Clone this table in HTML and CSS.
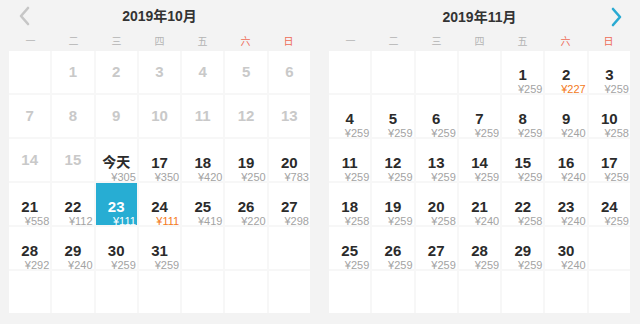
FILE: index.html
```html
<!DOCTYPE html>
<html lang="zh">
<head>
<meta charset="utf-8">
<title>日历</title>
<link rel="stylesheet" href="styles.css">
</head>
<body>
<div class="wrap">
  <section class="cal">
    <header class="cal-head">
      <span class="arrow arrow-prev"><svg width="12" height="20" viewBox="0 0 12 20"><path d="M10 2 L3 10 L10 18" fill="none" stroke="currentColor" stroke-width="2.6" stroke-linecap="round" stroke-linejoin="round"/></svg></span>
      <h2 class="title">2019年10月</h2>
      <span class="arrow-space"></span>
    </header>
    <div class="weekdays"><span>一</span><span>二</span><span>三</span><span>四</span><span>五</span><span class="we">六</span><span class="we">日</span></div>
    <div class="grid">
      <div class="cell"></div>
      <div class="cell off"><b>1</b></div>
      <div class="cell off"><b>2</b></div>
      <div class="cell off"><b>3</b></div>
      <div class="cell off"><b>4</b></div>
      <div class="cell off"><b>5</b></div>
      <div class="cell off"><b>6</b></div>

      <div class="cell off"><b>7</b></div>
      <div class="cell off"><b>8</b></div>
      <div class="cell off"><b>9</b></div>
      <div class="cell off"><b>10</b></div>
      <div class="cell off"><b>11</b></div>
      <div class="cell off"><b>12</b></div>
      <div class="cell off"><b>13</b></div>

      <div class="cell off"><b>14</b></div>
      <div class="cell off"><b>15</b></div>
      <div class="cell today"><b>今天</b><i>¥305</i></div>
      <div class="cell"><b>17</b><i>¥350</i></div>
      <div class="cell"><b>18</b><i>¥420</i></div>
      <div class="cell"><b>19</b><i>¥250</i></div>
      <div class="cell"><b>20</b><i>¥783</i></div>

      <div class="cell"><b>21</b><i>¥558</i></div>
      <div class="cell"><b>22</b><i>¥112</i></div>
      <div class="cell sel"><b>23</b><i>¥111</i></div>
      <div class="cell"><b>24</b><i class="low">¥111</i></div>
      <div class="cell"><b>25</b><i>¥419</i></div>
      <div class="cell"><b>26</b><i>¥220</i></div>
      <div class="cell"><b>27</b><i>¥298</i></div>

      <div class="cell"><b>28</b><i>¥292</i></div>
      <div class="cell"><b>29</b><i>¥240</i></div>
      <div class="cell"><b>30</b><i>¥259</i></div>
      <div class="cell"><b>31</b><i>¥259</i></div>
      <div class="cell"></div>
      <div class="cell"></div>
      <div class="cell"></div>

      <div class="cell"></div>
      <div class="cell"></div>
      <div class="cell"></div>
      <div class="cell"></div>
      <div class="cell"></div>
      <div class="cell"></div>
      <div class="cell"></div>
    </div>
  </section>

  <section class="cal">
    <header class="cal-head">
      <span class="arrow-space"></span>
      <h2 class="title">2019年11月</h2>
      <span class="arrow arrow-next"><svg width="12" height="20" viewBox="0 0 12 20"><path d="M2 2 L9 10 L2 18" fill="none" stroke="currentColor" stroke-width="2.6" stroke-linecap="round" stroke-linejoin="round"/></svg></span>
    </header>
    <div class="weekdays"><span>一</span><span>二</span><span>三</span><span>四</span><span>五</span><span class="we">六</span><span class="we">日</span></div>
    <div class="grid">
      <div class="cell"></div>
      <div class="cell"></div>
      <div class="cell"></div>
      <div class="cell"></div>
      <div class="cell"><b>1</b><i>¥259</i></div>
      <div class="cell"><b>2</b><i class="low">¥227</i></div>
      <div class="cell"><b>3</b><i>¥259</i></div>

      <div class="cell"><b>4</b><i>¥259</i></div>
      <div class="cell"><b>5</b><i>¥259</i></div>
      <div class="cell"><b>6</b><i>¥259</i></div>
      <div class="cell"><b>7</b><i>¥259</i></div>
      <div class="cell"><b>8</b><i>¥259</i></div>
      <div class="cell"><b>9</b><i>¥240</i></div>
      <div class="cell"><b>10</b><i>¥258</i></div>

      <div class="cell"><b>11</b><i>¥259</i></div>
      <div class="cell"><b>12</b><i>¥259</i></div>
      <div class="cell"><b>13</b><i>¥259</i></div>
      <div class="cell"><b>14</b><i>¥259</i></div>
      <div class="cell"><b>15</b><i>¥259</i></div>
      <div class="cell"><b>16</b><i>¥240</i></div>
      <div class="cell"><b>17</b><i>¥259</i></div>

      <div class="cell"><b>18</b><i>¥258</i></div>
      <div class="cell"><b>19</b><i>¥259</i></div>
      <div class="cell"><b>20</b><i>¥258</i></div>
      <div class="cell"><b>21</b><i>¥240</i></div>
      <div class="cell"><b>22</b><i>¥258</i></div>
      <div class="cell"><b>23</b><i>¥240</i></div>
      <div class="cell"><b>24</b><i>¥259</i></div>

      <div class="cell"><b>25</b><i>¥259</i></div>
      <div class="cell"><b>26</b><i>¥259</i></div>
      <div class="cell"><b>27</b><i>¥259</i></div>
      <div class="cell"><b>28</b><i>¥259</i></div>
      <div class="cell"><b>29</b><i>¥259</i></div>
      <div class="cell"><b>30</b><i>¥240</i></div>
      <div class="cell"></div>

      <div class="cell"></div>
      <div class="cell"></div>
      <div class="cell"></div>
      <div class="cell"></div>
      <div class="cell"></div>
      <div class="cell"></div>
      <div class="cell"></div>
    </div>
  </section>
</div>
</body>
</html>
```

FILE: styles.css
```css
html, body {
  margin: 0;
  padding: 0;
  background: #f3f3f3;
}
body {
  font-family: "Noto Sans CJK SC", "Noto Sans", sans-serif;
  color: #333;
  width: 640px;
  height: 324px;
  overflow: hidden;
}
.wrap {
  display: flex;
  gap: 19px;
  padding: 0 10px 0 9px;
}
.cal {
  width: 301px;
  flex: none;
}
.cal-head {
  height: 30px;
  display: grid;
  grid-template-columns: 1fr auto 1fr;
  align-items: center;
}
.title {
  margin: 0;
  font-family: "Liberation Sans", "Noto Sans CJK SC", sans-serif;
  font-size: 14px;
  font-weight: 700;
  line-height: 30px;
  color: #333;
  padding-top: 1px;
}
.arrow {
  display: flex;
  align-items: center;
  height: 30px;
}
.arrow svg { display: block; }
.arrow-prev {
  color: #c6c6c6;
  padding-left: 9px;
}
.arrow-next {
  color: #2aaad2;
  justify-content: flex-end;
  padding-right: 7px;
  padding-top: 2px;
}
.weekdays {
  display: grid;
  grid-template-columns: repeat(7, 1fr);
  height: 21px;
  align-items: center;
  font-size: 10px;
  color: #b4b4b4;
  text-align: center;
}
.weekdays .we { color: #ee6b55; }
.grid {
  display: grid;
  grid-template-columns: repeat(7, 1fr);
  grid-auto-rows: 42px;
  gap: 2px;
  background: #f7f7f7;
}
.cell {
  background: #fff;
  display: flex;
  flex-direction: column;
  padding-top: 15px;
  box-sizing: border-box;
}
.cell b {
  display: block;
  text-align: center;
  font-family: "Liberation Sans", "Noto Sans CJK SC", sans-serif;
  font-size: 15px;
  font-weight: 700;
  line-height: 17px;
  height: 17px;
  color: #2b2b2b;
}
.cell.today { padding-top: 12px; }
.cell.today b {
  font-family: "Noto Sans CJK SC", sans-serif;
  font-size: 14px;
  line-height: 20px;
  height: 20px;
}
.cell i {
  display: block;
  font-family: "Liberation Sans", "Noto Sans", sans-serif;
  font-style: normal;
  text-align: right;
  font-size: 11px;
  line-height: 13px;
  color: #a3a3a3;
  padding-right: 1px;
}
.cell i.low { color: #f47a22; }
.cell.off { padding-top: 12px; }
.cell.off b { color: #c9c9c9; }
.cell.sel { background: #27add3; }
.cell.sel b, .cell.sel i { color: #fff; }
```
